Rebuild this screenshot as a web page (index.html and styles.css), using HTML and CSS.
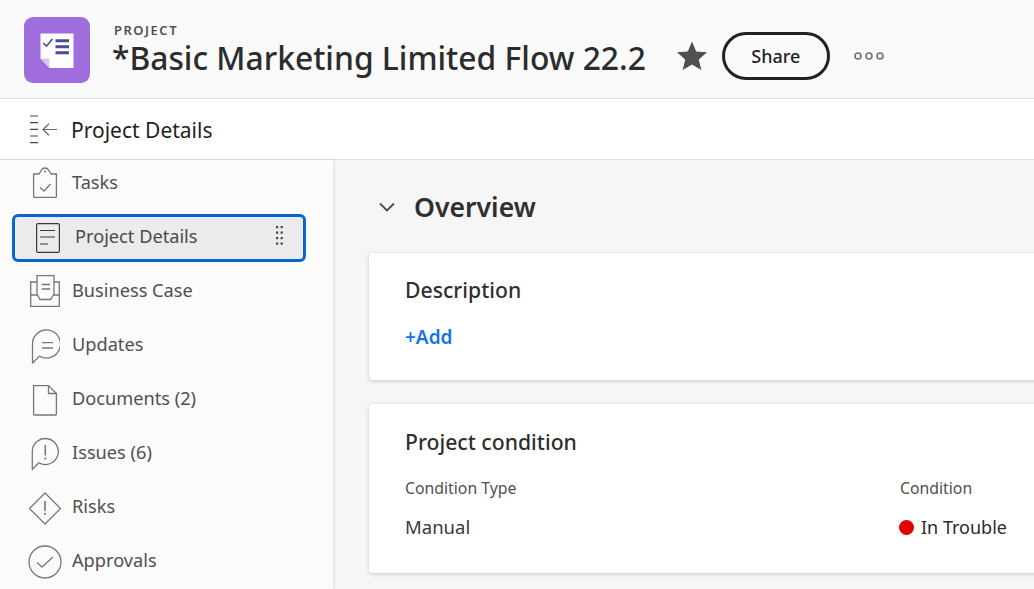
FILE: index.html
```html
<!DOCTYPE html>
<html lang="en">
<head>
    <meta charset="UTF-8">
    <title>Project Details</title>
    <link rel="stylesheet" href="styles.css">
</head>
<body>
    <header class="top-bar">
        <svg class="logo" width="66" height="66" viewBox="0 0 66 66">
            <rect width="66" height="66" rx="9" fill="#a06ddd"/>
            <path d="M16.5 16.5H49.5V51H25.5L16.5 41.5Z" fill="#fff"/>
            <path d="M16.5 41.5H25.5V51Z" fill="#d9c8ea"/>
            <path d="M19 26L22.500 29L28.500 22" fill="none" stroke="#474e93" stroke-width="1.6"/>
            <path d="M31.5 23.700H45M31.5 29.700H45M31.5 35.700H45" fill="none" stroke="#474e93" stroke-width="3"/>
        </svg>
        <div class="title-block">
            <div class="eyebrow">PROJECT</div>
            <h1 class="title">*Basic Marketing Limited Flow 22.2</h1>
        </div>
        <div class="actions">
            <svg class="star" width="32" height="30" viewBox="0 0 32 30">
                <path d="M16 0.5L20.2 10.4L31 11.3L22.8 18.4L25.3 29L16 23.4L6.7 29L9.2 18.4L1 11.3L11.8 10.4Z" fill="#505050"/>
            </svg>
            <button class="share-btn">Share</button>
            <svg class="more" width="32" height="10" viewBox="0 0 32 10">
                <circle cx="5" cy="5" r="3" fill="none" stroke="#707070" stroke-width="1.6"/>
                <circle cx="16" cy="5" r="3" fill="none" stroke="#707070" stroke-width="1.6"/>
                <circle cx="27" cy="5" r="3" fill="none" stroke="#707070" stroke-width="1.6"/>
            </svg>
        </div>
    </header>

    <div class="sub-bar">
        <svg class="collapse" width="30" height="29" viewBox="0 0 30 29">
            <path d="M0 1H8M0 7.700H8M0 14.300H8M0 21H8M0 27.700H8" fill="none" stroke="#444" stroke-width="1.2"/>
            <path d="M13 14.500H27M19 8.800L13 14.500L19 20.200" fill="none" stroke="#6a6a6a" stroke-width="1.2"/>
        </svg>
        <span class="sub-title">Project Details</span>
    </div>

    <div class="layout">
        <nav class="sidebar">
            <ul class="nav-list">
                <li class="nav-item">
                    <svg class="nav-icon" width="30" height="32" viewBox="0 0 30 32">
                        <path d="M3.600 8H9L11.500 4Q12.500 2 15 2Q17.500 2 18.500 4L21 8H26.400V30.500Q26.400 31.400 25.500 31.400H4.500Q3.600 31.400 3.600 30.500Z" fill="none" stroke="#777" stroke-width="1.300"/>
                        <circle cx="15" cy="5.500" r="1" fill="#777"/>
                        <path d="M10 21.500L14 25L20.500 18" fill="none" stroke="#777" stroke-width="1.300"/>
                    </svg>
                    <span>Tasks</span>
                </li>
                <li class="nav-item selected">
                    <svg class="nav-icon" width="30" height="30" viewBox="0 0 30 30">
                        <rect x="3.600" y="0.600" width="22.800" height="28.800" rx="1.500" fill="none" stroke="#3a3a3a" stroke-width="1.200"/>
                        <path d="M7 7.500H22M7 14H22M7 21H15" fill="none" stroke="#3a3a3a" stroke-width="1.200"/>
                    </svg>
                    <span>Project Details</span>
                    <svg class="grip" width="7" height="19" viewBox="0 0 7 19">
                        <g fill="#444">
                            <rect y="0" width="2.200" height="2.200"/><rect x="4.600" y="0" width="2.200" height="2.200"/>
                            <rect y="5.500" width="2.200" height="2.200"/><rect x="4.600" y="5.500" width="2.200" height="2.200"/>
                            <rect y="11" width="2.200" height="2.200"/><rect x="4.600" y="11" width="2.200" height="2.200"/>
                            <rect y="16.500" width="2.200" height="2.200"/><rect x="4.600" y="16.500" width="2.200" height="2.200"/>
                        </g>
                    </svg>
                </li>
                <li class="nav-item">
                    <svg class="nav-icon nudge-small" width="30" height="32" viewBox="0 0 30 32">
                        <path d="M7 7H0.700V31.300H29.300V7H24" fill="none" stroke="#777" stroke-width="1.300"/>
                        <path d="M7 20V0.700H24V20" fill="none" stroke="#777" stroke-width="1.300"/>
                        <path d="M0.700 20H7.500L10 24.500H20.500L23.500 20H29.300" fill="none" stroke="#777" stroke-width="1.300"/>
                        <path d="M11.700 9.500H20M11.700 14H20" fill="none" stroke="#777" stroke-width="1.300"/>
                    </svg>
                    <span>Business Case</span>
                </li>
                <li class="nav-item">
                    <svg class="nav-icon nudge" width="30" height="35" viewBox="0 0 30 35">
                        <path d="M2.500 34V15A14 14 0 1 1 9.500 27.100Z" fill="none" stroke="#777" stroke-width="1.300" stroke-linejoin="round"/>
                        <path d="M12 13.700H23M12 19H23" fill="none" stroke="#777" stroke-width="1.300"/>
                    </svg>
                    <span>Updates</span>
                </li>
                <li class="nav-item">
                    <svg class="nav-icon nudge" width="30" height="32" viewBox="0 0 30 32">
                        <path d="M3.600 1.600H18.500L26.400 9.500V30Q26.400 31 25.500 31H4.600Q3.600 31 3.600 30Z" fill="none" stroke="#777" stroke-width="1.300"/>
                        <path d="M18.500 1.600V9.500H26.400" fill="none" stroke="#777" stroke-width="1.300"/>
                    </svg>
                    <span>Documents (2)</span>
                </li>
                <li class="nav-item">
                    <svg class="nav-icon nudge" width="30" height="34" viewBox="0 0 30 34">
                        <path d="M2.300 32.500V14.500A13 13 0 1 1 8.800 25.800Z" fill="none" stroke="#777" stroke-width="1.300" stroke-linejoin="round"/>
                        <path d="M15.300 8V18.500" fill="none" stroke="#777" stroke-width="1.600"/>
                        <circle cx="15.300" cy="21.500" r="1.100" fill="#777"/>
                    </svg>
                    <span>Issues (6)</span>
                </li>
                <li class="nav-item">
                    <svg class="nav-icon nudge wide" width="34" height="34" viewBox="0 0 34 34">
                        <path d="M17 2L32.500 17.500L17 33L1.500 17.500Z" fill="none" stroke="#777" stroke-width="1.300" stroke-linejoin="round"/>
                        <path d="M17 10V20" fill="none" stroke="#777" stroke-width="1.600"/>
                        <circle cx="17" cy="23" r="1.100" fill="#777"/>
                    </svg>
                    <span>Risks</span>
                </li>
                <li class="nav-item">
                    <svg class="nav-icon nudge wide" width="34" height="34" viewBox="0 0 34 34">
                        <circle cx="17" cy="17" r="16" fill="none" stroke="#777" stroke-width="1.300"/>
                        <path d="M9 17.500L14 22L25 12" fill="none" stroke="#777" stroke-width="1.300"/>
                    </svg>
                    <span>Approvals</span>
                </li>
            </ul>
        </nav>

        <main class="content">
            <div class="section-head">
                <svg class="chevron" width="16" height="10" viewBox="0 0 16 10">
                    <path d="M1 1.500L8 8.500L15 1.500" fill="none" stroke="#4b4b4b" stroke-width="1.800"/>
                </svg>
                <h2 class="section-title">Overview</h2>
            </div>

            <section class="card card-desc">
                <h3 class="card-title">Description</h3>
                <a class="add-link">+Add</a>
            </section>

            <section class="card card-cond">
                <h3 class="card-title">Project condition</h3>
                <div class="fields">
                    <div class="field-type">
                        <div class="field-label">Condition Type</div>
                        <div class="field-value manual">Manual</div>
                    </div>
                    <div class="field-cond">
                        <div class="field-label">Condition</div>
                        <div class="field-value status"><span class="dot"></span>In Trouble</div>
                    </div>
                </div>
            </section>
        </main>
    </div>
</body>
</html>
```

FILE: styles.css
```css
html, body {
    height: 100%;
}

body {
    margin: 0;
    display: flex;
    flex-direction: column;
    overflow: hidden;
    font-family: 'Noto Sans', 'Open Sans', sans-serif;
    color: #2c2c2c;
    background-color: #f6f6f6;
}

.top-bar {
    display: flex;
    align-items: center;
    flex: none;
    box-sizing: border-box;
    height: 99px;
    padding: 2px 0 0 24px;
    background-color: #fafafa;
    border-bottom: 1px solid #e1e1e1;
}

.logo {
    flex: none;
}

.title-block {
    margin-left: 22px;
}

.eyebrow {
    margin-left: 2px;
    font-size: 13px;
    line-height: 16px;
    font-weight: 600;
    letter-spacing: 1.5px;
    color: #505050;
}

.title {
    margin: 0;
    font-size: 31.8px;
    line-height: 40px;
    font-weight: 500;
    white-space: nowrap;
}

.actions {
    display: flex;
    align-items: center;
    margin-top: 12px;
    margin-left: 30px;
}

.star {
    flex: none;
}

.share-btn {
    flex: none;
    width: 108px;
    height: 48px;
    margin-left: 14px;
    padding: 0;
    border: 3px solid #222;
    border-radius: 24px;
    background-color: #fafafa;
    color: #222;
    font-family: inherit;
    font-size: 18px;
    font-weight: 500;
}

.more {
    flex: none;
    margin-left: 23px;
}

.sub-bar {
    display: flex;
    align-items: center;
    flex: none;
    height: 60px;
    padding-left: 30px;
    background-color: #fff;
    border-bottom: 1px solid #e1e1e1;
}

.sub-title {
    margin-left: 11px;
    padding-top: 2px;
    font-size: 21px;
    color: #1f1f1f;
}

.layout {
    display: flex;
    flex: 1;
    min-height: 0;
}

.sidebar {
    flex: none;
    width: 333px;
    overflow: hidden;
    background-color: #fbfbfb;
    box-shadow: 1px 0 3px rgba(0, 0, 0, 0.1);
}

.nav-list {
    display: flex;
    flex-direction: column;
    gap: 6px;
    margin: -2px 27px 0 12px;
    padding: 0;
    list-style: none;
}

.nav-item {
    display: flex;
    align-items: center;
    box-sizing: border-box;
    height: 48px;
    padding: 0 20px 0 18px;
    font-size: 18.2px;
    color: #505050;
}

.nav-icon {
    flex: none;
    margin-right: 12px;
}

.nav-icon.nudge-small {
    margin-top: 2px;
}

.nav-icon.nudge {
    margin-top: 4px;
}

.nav-icon.wide {
    margin-left: -2px;
    margin-right: 10px;
}

.nav-item.selected {
    position: relative;
    top: 2px;
    border: 3px solid #0a66cf;
    border-radius: 6px;
    background-color: #ebebeb;
    color: #4a4a4a;
}

.nav-item.selected span {
    margin-bottom: 4px;
}

.grip {
    flex: none;
    margin-left: auto;
    margin-bottom: 6px;
}

.content {
    flex: 1;
    min-width: 0;
    padding-left: 36px;
}

.section-head {
    display: flex;
    align-items: center;
    height: 93px;
    padding-left: 10px;
}

.chevron {
    flex: none;
}

.section-title {
    margin: 0 0 0 19px;
    font-size: 26.6px;
    font-weight: 600;
    color: #2f2f2f;
}

.card {
    box-sizing: border-box;
    margin-right: -20px;
    padding-left: 36px;
    background-color: #fff;
    border-radius: 4px;
    box-shadow: 0 1px 4px rgba(0, 0, 0, 0.2);
}

.card-desc {
    height: 127px;
    padding-top: 21px;
}

.card-cond {
    height: 169px;
    margin-top: 24px;
    padding-top: 22px;
}

.card-title {
    margin: 0;
    font-size: 21.2px;
    line-height: 32px;
    font-weight: 500;
    color: #2f2f2f;
}

.add-link {
    display: block;
    margin-top: 18px;
    font-size: 19px;
    line-height: 26px;
    font-weight: 600;
    color: #1473e6;
}

.fields {
    display: flex;
    margin-top: 18px;
}

.field-type {
    width: 495px;
}

.field-label {
    font-size: 15.8px;
    line-height: 24px;
    color: #505050;
}

.field-value {
    margin-top: 15px;
    font-size: 18px;
    line-height: 24px;
    color: #3a3a3a;
}

.manual {
    font-size: 18.5px;
}

.status {
    display: flex;
    align-items: center;
    color: #2c2c2c;
}

.dot {
    width: 15px;
    height: 15px;
    margin-left: -1px;
    margin-right: 7px;
    border-radius: 50%;
    background-color: #e20000;
}
```
